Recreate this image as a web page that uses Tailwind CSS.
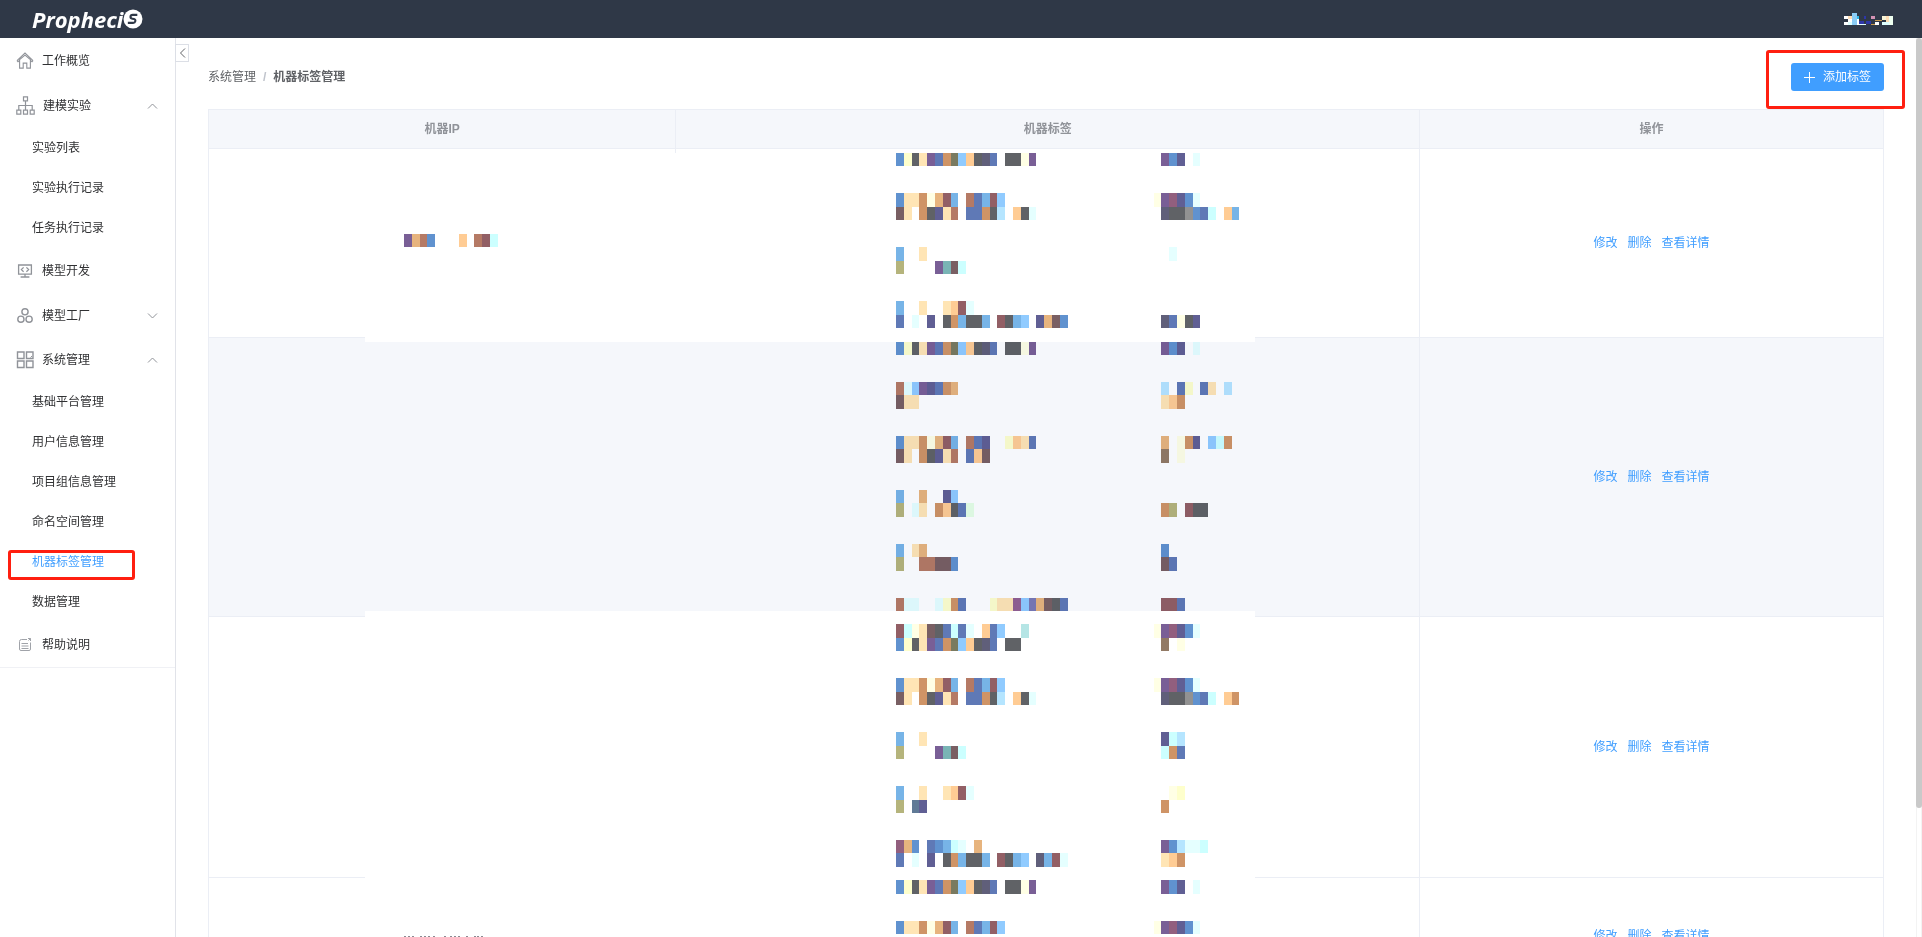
<!DOCTYPE html>
<html lang="zh-CN">
<head>
<meta charset="utf-8">
<title>Prophecis - 机器标签管理</title>
<script src="https://cdn.jsdelivr.net/npm/@tailwindcss/browser@4"></script>
</head>
<body class="h-screen overflow-hidden flex flex-col bg-white text-[12px] leading-[18px] text-[#303133] font-['Liberation_Sans','Noto_Sans_CJK_SC',sans-serif]">

<header class="h-[38px] shrink-0 bg-[#2f3847] flex items-center justify-between pl-8 pr-[29px]">
  <a href="#" class="flex items-center text-white" aria-label="Prophecis">
    <span class="font-['Open_Sans',sans-serif] italic font-bold text-[22px] leading-[28px]">Propheci</span>
    <svg class="size-[20px]" viewBox="0 0 19 19" aria-hidden="true">
      <circle cx="9.5" cy="9.5" r="9" fill="#fff"/>
      <path d="M13.600 5.600H9.200C6.600 5.600 6.400 8.900 8.800 9.200L10.400 9.500C12.600 9.900 12 13.200 9.600 13.200H4.600" fill="none" stroke="#2f3847" stroke-width="2"/>
    </svg>
  </a>
  <svg class="w-[49px] h-3" viewBox="0 0 49 12" shape-rendering="crispEdges" aria-hidden="true">
    <path fill="#fff" d="M0 3h4v3H0zM4 6h4v3H4zM0 9h4v3H0zM13 6h2v6h-2zM31 9h4v3h-4z"/>
    <path fill="#ffddb5" d="M4 3h4v3H4zM42 3h3v6h-3z"/>
    <path fill="#8accf5" d="M8 0h5v12H8z"/>
    <path fill="#30b8e8" d="M13 3h2v3h-2z"/>
    <path fill="#2d36a8" d="M20 3h2v3h-2zM15 8h5v3h-5zM22 8h5v3h-5z"/>
    <path fill="#dfffff" d="M4 9h4v3H4zM15 11h7v1h-7zM38 9h7v3h-7z"/>
    <path fill="#d292b4" d="M27 3h4v3h-4z"/>
    <path fill="#c99a52" d="M31 7h7v1h-7zM27 11h4v1h-4z"/>
    <path fill="#f7f3d6" d="M38 3h4v4h-4z"/>
    <path fill="#eefff0" d="M45 3h4v9h-4z"/>
  </svg>
</header>

<div class="flex-1 min-h-0 flex relative">
  <aside class="w-44 shrink-0 border-r border-[#e1e3e9] relative">
    <nav class="border-b border-[#f0f1f5]">
      <a href="#" class="h-[45px] pl-4 flex items-center gap-2">
        <svg class="size-[18px]" viewBox="0 0 18 18" fill="none" stroke="#909399" stroke-width="1.1"><path d="M1 8.700 9 1.100l8 7.600M3.600 7.700 9 3.100l5.400 4.600M3.600 7.500v8.600h3.600v-5h3.600v5h3.600V7.500M1 8.700l1 1 1.600-1.400M17 8.700l-1 1-1.600-1.400"/></svg>
        工作概览</a>
      <button type="button" class="w-full h-[45px] pl-4 pr-[17px] flex items-center gap-2 text-left">
        <svg class="w-[19px] h-[19px]" viewBox="0 0 19 19" fill="none" stroke="#909399" stroke-width="1.2"><path d="M7.500.8h4v4h-4zM.8 14.200h4v4h-4zM7.500 14.200h4v4h-4zM14.200 14.200h4v4h-4zM9.500 4.800v9.400M2.800 14.200V9.500h13.400v4.700"/></svg>
        <span class="flex-1">建模实验</span>
        <svg class="w-[11px] h-[6px]" viewBox="0 0 11 6" fill="none" stroke="#909399"><path d="m1 5.500 4.500-4.500L10 5.500"/></svg>
      </button>
      <ul class="leading-10 pl-8">
        <li><a href="#">实验列表</a></li>
        <li><a href="#">实验执行记录</a></li>
        <li><a href="#">任务执行记录</a></li>
      </ul>
      <a href="#" class="h-[45px] pl-4 flex items-center gap-2">
        <svg class="size-[18px]" viewBox="0 0 18 18" fill="none" stroke="#909399" stroke-width="1.3"><path d="M2.600 3h12.800v9.200H2.600zM7.600 5.400 5.400 7.600l2.200 2.200M10.400 5.400l2.200 2.200-2.200 2.200M4.600 15h8.800M9 12.200V15"/></svg>
        模型开发</a>
      <button type="button" class="w-full h-[45px] pl-4 pr-[17px] flex items-center gap-2 text-left">
        <svg class="size-[18px]" viewBox="0 0 18 18" fill="none" stroke="#909399" stroke-width="1.4"><circle cx="9" cy="4.800" r="3.100"/><circle cx="4.900" cy="12.200" r="3.100"/><circle cx="13.100" cy="12.200" r="3.100"/></svg>
        <span class="flex-1">模型工厂</span>
        <svg class="w-[11px] h-[6px]" viewBox="0 0 11 6" fill="none" stroke="#909399"><path d="m1 .5 4.500 4.500L10 .5"/></svg>
      </button>
      <button type="button" class="w-full h-11 pl-4 pr-[17px] flex items-center gap-2 text-left">
        <svg class="size-[18px]" viewBox="0 0 18 18" fill="none" stroke="#909399" stroke-width="1.400"><path d="M1.500 1h6.500v6.500H1.500zM10.500 1h6.500v6.500h-6.500zM1.500 10h6.500v6.500H1.500zM10.500 10h6.500v6.500h-6.500z"/><path stroke-width="1" d="m14.500 6.500 1.500-1.500"/></svg>
        <span class="flex-1">系统管理</span>
        <svg class="w-[11px] h-[6px]" viewBox="0 0 11 6" fill="none" stroke="#909399"><path d="m1 5.500 4.500-4.500L10 5.500"/></svg>
      </button>
      <ul class="leading-10 pl-8">
        <li><a href="#">基础平台管理</a></li>
        <li><a href="#">用户信息管理</a></li>
        <li><a href="#">项目组信息管理</a></li>
        <li><a href="#">命名空间管理</a></li>
        <li class="relative"><a href="#" class="text-[#409eff]" aria-current="page">机器标签管理</a>
          <span class="absolute -left-6 top-2 w-[127px] h-[30px] border-3 border-[#ff1f10] rounded-[3px] pointer-events-none"></span></li>
        <li><a href="#">数据管理</a></li>
      </ul>
      <a href="#" class="h-[45px] pl-4 flex items-center gap-2">
        <svg class="size-[18px]" viewBox="0 0 18 18" fill="none" stroke="#a0a3a9"><path d="M11 3.500H5.500Q3.500 3.500 3.500 5.500v7.500q0 1.500 1.500 1.500h8q1.500 0 1.500-1.500V6.500M5.500 7.500h6.500M5.500 10h7M5.500 12.500h7M12 2.500h2.500V5M14.500 2.500 12.500 4.500"/></svg>
        帮助说明</a>
    </nav>
    <button type="button" aria-label="收起菜单" class="absolute left-full top-[6px] w-[14px] h-[18px] border border-[#dcdfe6] bg-white flex items-center justify-center">
      <svg class="w-[7px] h-[10px]" viewBox="0 0 7 10" fill="none" stroke="#606266"><path d="M6 .5 1.500 5 6 9.500"/></svg>
    </button>
  </aside>

  <main class="flex-1 min-w-0 overflow-hidden pl-8 pr-[38px] pt-[25px]">
    <div class="flex items-center justify-between h-7 mb-[18px]">
      <nav class="flex items-center gap-[7px] text-[#606266]" aria-label="breadcrumb">
        <a href="#">系统管理</a>
        <span class="text-[#c0c4cc] font-bold">/</span>
        <span class="font-bold">机器标签管理</span>
      </nav>
      <div class="relative">
        <button type="button" class="h-7 w-[93px] rounded-[3px] bg-[#409eff] text-white flex items-center justify-center gap-2">
          <svg class="size-[11px]" viewBox="0 0 11 11" fill="none" stroke="#fff"><path d="M5.500 0v11M0 5.500h11"/></svg>
          添加标签</button>
        <span class="absolute -left-[25px] -top-[13px] w-[139px] h-[59px] border-3 border-[#ff1f10] rounded-[3px] pointer-events-none"></span>
      </div>
    </div>

    <div class="relative border-t border-l border-[#ebeef5]">
      <table class="w-full table-fixed border-separate border-spacing-0 text-center [&_th]:border-r [&_th]:border-b [&_th]:border-[#ebeef5] [&_td]:border-r [&_td]:border-b [&_td]:border-[#ebeef5]">
        <colgroup><col class="w-[27.9%]"><col class="w-[44.4%]"><col></colgroup>
        <thead class="bg-[#f5f7fb] text-[#909399]">
          <tr class="h-[39px]"><th>机器IP</th><th>机器标签</th><th>操作</th></tr>
        </thead>
        <tbody>
          <tr class="h-[189px]"><td></td><td></td><td><div class="flex justify-center gap-[10px] text-[#409eff]"><a href="#">修改</a><a href="#">删除</a><a href="#">查看详情</a></div></td></tr>
          <tr class="h-[279px] bg-[#f5f7fb]"><td></td><td></td><td><div class="flex justify-center gap-[10px] text-[#409eff]"><a href="#">修改</a><a href="#">删除</a><a href="#">查看详情</a></div></td></tr>
          <tr class="h-[261px]"><td></td><td></td><td><div class="flex justify-center gap-[10px] text-[#409eff]"><a href="#">修改</a><a href="#">删除</a><a href="#">查看详情</a></div></td></tr>
          <tr class="h-[117px]"><td></td><td></td><td><div class="flex justify-center gap-[10px] text-[#409eff]"><a href="#">修改</a><a href="#">删除</a><a href="#">查看详情</a></div></td></tr>
        </tbody>
      </table>
      <!-- Pixelated cover over the private IP and label columns -->
      <svg class="absolute left-[156px] top-[43px] w-[890px] h-[800px]" viewBox="0 0 890 800" shape-rendering="crispEdges" aria-hidden="true">
        <path fill="#fff" d="M0 0h890v800H0z"/>
        <path fill="#f5f7fb" d="M0 189h890v269H0z"/>
        <g id="mosaic" class="mix-blend-multiply"></g>
        <path stroke="#8b8a92" d="M39 783.500h2M43 783.500h2M47 783.500h2M55 783.500h2M59 783.500h2M63 783.500h2M68 783.500h2M79 783.500h2M85 783.500h2M89 783.500h2M93 783.500h2M101 783.500h2M109 783.500h2M112 783.500h2M116 783.500h2"/>
      </svg>
    </div>
  </main>

  <div class="absolute right-0 inset-y-0 w-[6px] border-x border-[#f3f3f3]" aria-hidden="true"><div class="absolute -inset-x-px top-0 h-[85.6%] rounded-[3px] bg-[#c9c9c9]"></div></div>
</div>

<script>
const colours = {a:'#6092cf',b:'#feffcc',c:'#606266',d:'#ffe5b5',e:'#795f96',f:'#5f79b6',g:'#cf9466',h:'#797a60',i:'#90cbff',j:'#ffcc94',k:'#605f7a',l:'#605f94',m:'#e5ffff',n:'#e7b47e',o:'#925f65',p:'#77b4e7',q:'#b57a65',r:'#795f63',s:'#b5e5ff',t:'#b5b47c',u:'#79b4b5',v:'#ccffff',w:'#ffffe5',x:'#925f7e',y:'#929292',z:'#b5e5e5',A:'#927a65',B:'#607a96',C:'#7979b5',D:'#925f92',E:'#e5ffe5'};
// [block row, block column, colour codes]
const blocks = [
[6,5,'enqa...j.qov'],
[0,68,'abcdefghijckf.ccwe'],[0,102,'eal.m'],
[3,68,'addgwnop.qfpoi'],[3,101,'wexlam'],
[4,68,'rd.gcldq.ffgcs.jcm'],[4,102,'kccyafv.jp'],
[7,68,'p..d'],[7,102,'.m'],[8,68,'t....eurv'],
[11,68,'p..d..djom'],[12,68,'f.m.l.cgpccp.ocpi.lnra'],[12,102,'kfwcl'],
[14,68,'abcdefghijckf.ccwe'],[14,102,'eal.m'],
[17,68,'qmielfgn'],[17,102,'s.fb.fd.s'],[18,68,'rdd'],[18,102,'djg'],
[21,68,'addgwnop.qfl..bjdf'],[21,102,'n.wgl.ivg'],[22,68,'rd.gcldq.fjr'],[22,102,'A.w'],
[25,68,'p..n..li'],[26,68,'t.md.gjcfE'],[26,102,'gt.occ'],
[29,68,'p.dn'],[29,102,'a'],[30,68,'t..qqrra'],[30,102,'rf'],
[33,68,'qmm..mbgf...bddDiCnrcf'],[33,102,'oof'],
[35,68,'ovwdrcfvfm.jfi..z'],[35,101,'wexlam'],[36,68,'abcdefghijckf.cc'],[36,102,'A.w'],
[39,68,'addgwnop.qfpoi'],[39,101,'wexlam'],[40,68,'rd.gcldq.ffgcs.jcm'],[40,102,'kccyafv.jg'],
[43,68,'p..d'],[43,102,'lvs'],[44,68,'t....eurv'],[44,102,'vgf'],
[47,68,'p..d..djom'],[47,102,'.wb'],[48,68,'t.Bl'],[48,102,'g'],
[51,68,'xna.fapvm.n'],[51,102,'easmmv'],[52,68,'f.m.l.cgpccp.ocpi.kpom'],[52,102,'djg'],
[54,68,'abcdefghijckf.ccwe'],[54,102,'eal.m'],
[57,68,'addgwnop.qfpoi'],[57,101,'wexlam']];
const px = c => Math.round(c * 7.808), py = r => Math.round(r * 13.47);
document.getElementById('mosaic').innerHTML = blocks.map(([r, c, s]) => [...s].map((k, i) => k === '.' ? '' :
  `<rect x="${px(c + i)}" y="${py(r)}" width="${px(c + i + 1) - px(c + i)}" height="${py(r + 1) - py(r)}" fill="${colours[k]}"/>`).join('')).join('');
</script>
</body>
</html>
